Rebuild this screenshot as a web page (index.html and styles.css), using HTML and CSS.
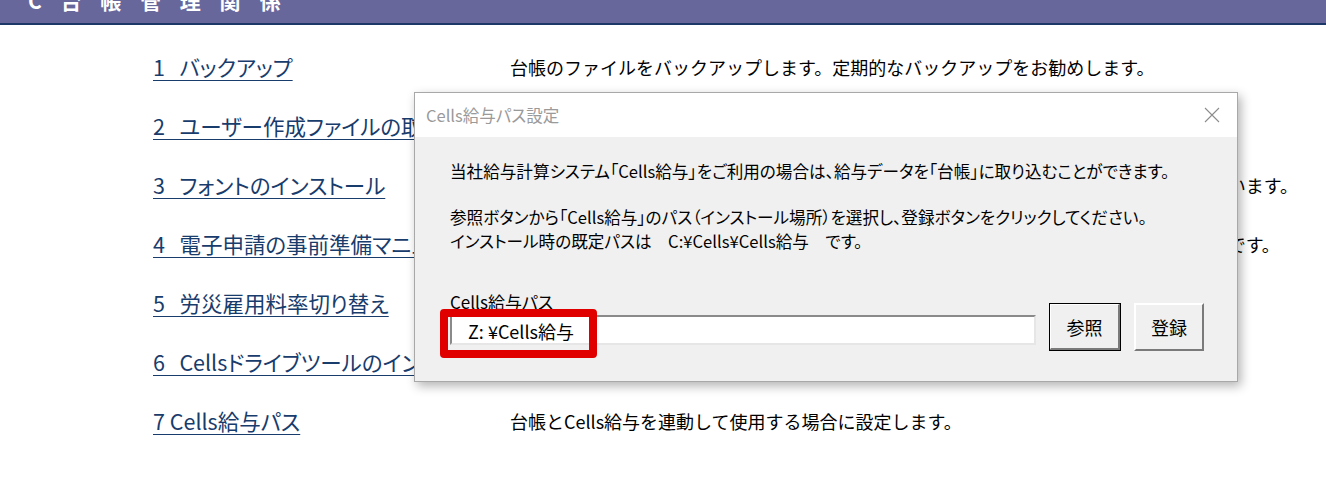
FILE: index.html
```html
<!DOCTYPE html>
<html lang="ja">
<head>
    <meta charset="UTF-8">
    <meta name="viewport" content="width=device-width, initial-scale=1.0">
    <title>台帳管理関係</title>
    <link rel="stylesheet" href="styles.css">
</head>
<body>
    <header class="section-bar">
        <h1>C 台 帳 管 理 関 係</h1>
    </header>

    <main class="menu">
        <a class="menu-link" href="#">1&nbsp;&nbsp;&nbsp;バックアップ</a>
        <p class="menu-desc">台帳のファイルをバックアップします。定期的なバックアップをお勧めします。</p>

        <a class="menu-link" href="#">2&nbsp;&nbsp;&nbsp;ユーザー作成ファイルの取り込み</a>
        <p class="menu-desc">ユーザーが作成したファイルを台帳に取り込みます。</p>

        <a class="menu-link" href="#">3&nbsp;&nbsp;&nbsp;フォントのインストール</a>
        <p class="menu-desc">台帳で使用するフォントをインストールします。台帳を初めてご利用になる場合に必ず行います。</p>

        <a class="menu-link" href="#">4&nbsp;&nbsp;&nbsp;電子申請の事前準備マニュアル</a>
        <p class="menu-desc">電子申請を行うために事前に必要となるパソコンの設定や準備を説明しているマニュアルです。</p>

        <a class="menu-link" href="#">5&nbsp;&nbsp;&nbsp;労災雇用料率切り替え</a>
        <p class="menu-desc">労災保険料率と雇用保険料率を切り替えます。</p>

        <a class="menu-link" href="#">6&nbsp;&nbsp;&nbsp;Cellsドライブツールのインストール</a>
        <p class="menu-desc">Cellsドライブツールをインストールします。</p>

        <a class="menu-link" href="#">7 Cells給与パス</a>
        <p class="menu-desc">台帳とCells給与を連動して使用する場合に設定します。</p>
    </main>

    <!-- Cells給与パス設定 window -->
    <div class="dialog">
        <div class="dialog-title">
            <span>Cells給与パス設定</span>
            <svg class="close-icon" width="16" height="16" viewBox="0 0 16 16">
                <path d="M1 1 L15 15 M15 1 L1 15" stroke="#8c8c8c" stroke-width="1.1" fill="none"/>
            </svg>
        </div>
        <div class="dialog-body">
            <p>当社給与計算システム「Cells給与」をご利用の場合は、給与データを「台帳」に取り込むことができます。</p>
            <p>参照ボタンから「Cells給与」のパス（インストール場所）を選択し、登録ボタンをクリックしてください。<br>インストール時の既定パスは　C:¥Cells¥Cells給与　です。</p>

            <div class="field-row">
                <div class="field">
                    <label class="field-label">Cells給与パス</label>
                    <div class="path-input">Z:&nbsp;¥Cells給与</div>
                    <div class="highlight"></div>
                </div>
                <button class="win-btn default">参照</button>
                <button class="win-btn">登録</button>
            </div>
        </div>
    </div>
</body>
</html>
```

FILE: styles.css
```css
/* General styles */
body {
    margin: 0;
    padding: 0;
    background-color: #fff;
    font-family: "Noto Sans CJK JP", "Noto Sans", sans-serif;
    overflow: hidden;
}

/* Section header bar */
.section-bar {
    height: 23px;
    background-color: #67679b;
    border-bottom: 2px solid #1c3868;
    overflow: hidden;
}

.section-bar h1 {
    margin: -13px 0 0 28px;
    font-size: 21px;
    line-height: 26px;
    font-weight: bold;
    color: #fff;
    letter-spacing: 4px;
    word-spacing: 6px;
}

/* Menu list */
.menu {
    display: grid;
    grid-template-columns: 357px 1fr;
    grid-auto-rows: 59px;
    align-items: center;
    padding: 12px 0 0 153px;
}

.menu-link {
    justify-self: start;
    font-size: 21.5px;
    font-feature-settings: "palt";
    color: #183c6c;
    text-decoration: underline;
    text-underline-offset: 4px;
    text-decoration-thickness: 1px;
    white-space: nowrap;
}

.menu-desc {
    margin: 0;
    font-size: 18px;
    color: #000;
    white-space: nowrap;
}

/* Dialog window */
.dialog {
    position: absolute;
    left: 414px;
    top: 92px;
    width: 822px;
    height: 288px;
    border: 1px solid #a8a8a8;
    background-color: #f0f0f0;
    box-shadow: 3px 4px 10px rgba(0, 0, 0, 0.3);
}

.dialog-title {
    display: flex;
    align-items: center;
    justify-content: space-between;
    height: 44px;
    padding: 0 16px 0 11px;
    background-color: #fff;
    font-size: 16.5px;
    font-feature-settings: "palt";
    color: #9a9a9a;
}

.close-icon {
    margin-right: 1px;
}

.dialog-body {
    padding: 22px 33px 0 35px;
    font-size: 16.6px;
    font-feature-settings: "palt";
    line-height: 24px;
    color: #000;
}

.dialog-body p {
    margin: 0 0 22px 0;
}

.field-row {
    display: flex;
    align-items: flex-end;
    gap: 13px;
    margin-top: 38px;
}

.field {
    position: relative;
    flex: 1;
}

.field-label {
    display: block;
    font-size: 17px;
    line-height: 22px;
    margin-bottom: 2px;
}

.path-input {
    height: 26px;
    padding-left: 16px;
    background-color: #fff;
    border-top: 2px solid #8a8a8a;
    border-left: 2px solid #8a8a8a;
    border-bottom: 2px solid #e6e6e6;
    border-right: 2px solid #e6e6e6;
    font-size: 18px;
    line-height: 28px;
}

.highlight {
    position: absolute;
    left: -10px;
    top: 18px;
    width: 141px;
    height: 33px;
    border: 8px solid #e00000;
    border-radius: 4px;
}

/* Classic 3D buttons */
.win-btn {
    width: 72px;
    height: 48px;
    margin-bottom: -6px;
    background-color: #f0f0f0;
    border: 2px solid;
    border-color: #fff #7a7a7a #7a7a7a #fff;
    font-family: inherit;
    font-size: 18px;
    color: #000;
    padding: 0;
}

.win-btn.default {
    outline: 1px solid #000;
    outline-offset: -1px;
    border-width: 2px 3px 3px 2px;
}

.win-btn + .win-btn {
    width: 70px;
}
```
